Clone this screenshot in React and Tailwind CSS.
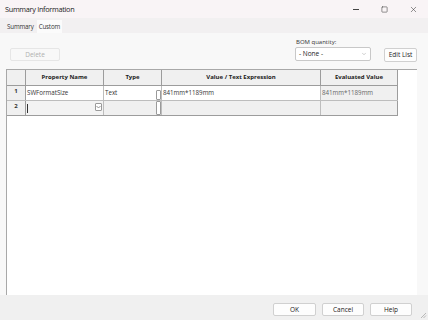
import { Square, X, ChevronDown } from 'lucide-react';

const font = { fontFamily: '"Open Sans", "Noto Sans", sans-serif' };

const Btn = ({ children, className = '' }) => (
  <div
    className={`flex items-center justify-center border border-[#d0d0d0] bg-[#fdfdfd] rounded-[2px] text-[6.5px] text-[#222] ${className}`}
  >
    {children}
  </div>
);

const DropStub = ({ className = '', chevron = true }) => (
  <div
    className={`flex items-center justify-center bg-white border border-[#9a9a9a] rounded-[1px] ${className}`}
  >
    {chevron && (
      <svg width="5" height="4" viewBox="0 0 5 4">
        <path d="M0.5 1 L2.5 3 L4.5 1" fill="none" stroke="#777" strokeWidth="0.8" />
      </svg>
    )}
  </div>
);

export default function App() {
  return (
    <div style={font} className="w-[428px] h-[320px] bg-[#f0f0f0] flex flex-col overflow-hidden text-[#1a1a1a]">
      {/* Title bar */}
      <div className="h-[18px] bg-[#f9f4f6] flex items-center justify-between pl-[5px] shrink-0">
        <span className="text-[7.3px] tracking-[-0.3px] text-[#222]">Summary Information</span>
        <div className="flex items-center h-full">
          <div className="w-[28px] flex justify-center">
            <div className="w-[6px] h-px bg-[#444]" />
          </div>
          <div className="w-[28px] flex justify-center">
            <Square className="w-[7px] h-[7px] text-[#333]" strokeWidth={1.8} />
          </div>
          <div className="w-[30px] flex justify-center">
            <X className="w-[9px] h-[9px] text-[#333]" strokeWidth={1.4} />
          </div>
        </div>
      </div>

      {/* Tabs */}
      <div className="h-[15px] bg-[#f2f0f1] flex items-end pl-[5px] shrink-0">
        <div className="h-[12px] px-[2px] flex items-center text-[6.2px] tracking-[-0.15px] text-[#333]">Summary</div>
        <div className="h-[13px] ml-[1px] px-[2px] bg-[#fbfbfb] flex items-center text-[6.2px] tracking-[-0.15px] text-[#333]">
          Custom
        </div>
      </div>

      {/* Tab page */}
      <div className="flex-1 bg-[#f8f8f8] flex flex-col pl-[6px] pr-[11px] pt-[5px]">
        <div className="h-[31px] flex items-start shrink-0">
          <div className="mt-[10px] ml-[4px] w-[50px] h-[13px] border border-[#e6e6e6] rounded-[2px] flex items-center justify-center text-[6.5px] text-[#b0b0b0]">
            Delete
          </div>
          <div className="flex-1" />
          <div className="flex flex-col mr-[13px]">
            <span className="text-[6px] text-[#333] leading-[8px] ml-[1px]">BOM quantity:</span>
            <div className="mt-[1px] w-[76px] h-[14px] bg-white border border-[#c8c8c8] rounded-[2px] flex items-center justify-between px-[3px]">
              <span className="text-[6.5px] text-[#222]">- None -</span>
              <ChevronDown className="w-[6px] h-[6px] text-[#888]" strokeWidth={1.6} />
            </div>
          </div>
          <Btn className="mt-[10px] w-[33px] h-[14px]">Edit List</Btn>
        </div>

        {/* Grid area */}
        <div className="flex-1 bg-white border-t border-l border-[#a8a8a8] flex flex-col">
          <div className="w-[391px] text-[6px]">
            {/* Header */}
            <div className="flex h-[16px] bg-[#f0f0f0] border-b border-[#9c9c9c] font-bold text-[#222]">
              <div className="w-[19px] border-r border-[#9c9c9c]" />
              <div className="w-[78px] border-r border-[#9c9c9c] flex items-center justify-center">Property Name</div>
              <div className="w-[58px] border-r border-[#9c9c9c] flex items-center justify-center">Type</div>
              <div className="w-[159px] border-r border-[#9c9c9c] flex items-center justify-center">Value / Text Expression</div>
              <div className="w-[77px] border-r border-[#9c9c9c] flex items-center justify-center">Evaluated Value</div>
            </div>
            {/* Row 1 */}
            <div className="flex h-[15px] border-b border-[#bdbdbd] text-[#333] text-[6.2px]">
              <div className="w-[19px] bg-[#f0f0f0] border-r border-[#9c9c9c] flex justify-center pt-[1px] font-bold text-[6px]">1</div>
              <div className="w-[78px] border-r border-[#bdbdbd] flex items-center pl-[1px]">SWFormatSize</div>
              <div className="w-[58px] border-r border-[#bdbdbd] flex items-center justify-between pl-[1px]">
                <span>Text</span>
                <DropStub className="w-[5px] h-[10px] mt-[4px]" chevron={false} />
              </div>
              <div className="w-[159px] border-r border-[#bdbdbd] flex items-center pl-[1px]">841mm*1189mm</div>
              <div className="w-[77px] border-r border-[#9c9c9c] bg-[#f0f0f0] flex items-center pl-[1px] text-[#666]">841mm*1189mm</div>
            </div>
            {/* Row 2 */}
            <div className="flex h-[15px] border-b border-[#9c9c9c] text-[#333]">
              <div className="w-[19px] bg-[#f0f0f0] border-r border-[#9c9c9c] flex justify-center pt-[1px] font-bold text-[6px]">2</div>
              <div className="w-[78px] border-r border-[#bdbdbd] bg-[#f3f3f3] flex items-center justify-between pl-[1px] pr-[1px]">
                <div className="w-px h-[9px] bg-[#333]" />
                <DropStub className="w-[7px] h-[8px] mb-[3px]" />
              </div>
              <div className="w-[58px] border-r border-[#bdbdbd] bg-[#f0f0f0] flex justify-end">
                <DropStub className="w-[5px] h-[14px]" chevron={false} />
              </div>
              <div className="w-[159px] border-r border-[#bdbdbd] bg-[#f0f0f0]" />
              <div className="w-[77px] border-r border-[#9c9c9c] bg-[#f0f0f0]" />
            </div>
          </div>
        </div>
      </div>

      {/* Bottom buttons */}
      <div className="h-[25px] bg-[#f0f0f0] flex items-start justify-end pt-[8px] pr-[16px] gap-[6px] shrink-0 relative">
        <Btn className="w-[43px] h-[13px] border-[#8fb4e0]">OK</Btn>
        <Btn className="w-[42px] h-[13px]">Cancel</Btn>
        <Btn className="w-[42px] h-[13px]">Help</Btn>
        <svg className="absolute right-[1px] bottom-[1px]" width="7" height="7" viewBox="0 0 7 7">
          <path d="M6 1 L1 6 M6 3.5 L3.5 6" stroke="#aaa" strokeWidth="0.8" />
        </svg>
      </div>
    </div>
  );
}
